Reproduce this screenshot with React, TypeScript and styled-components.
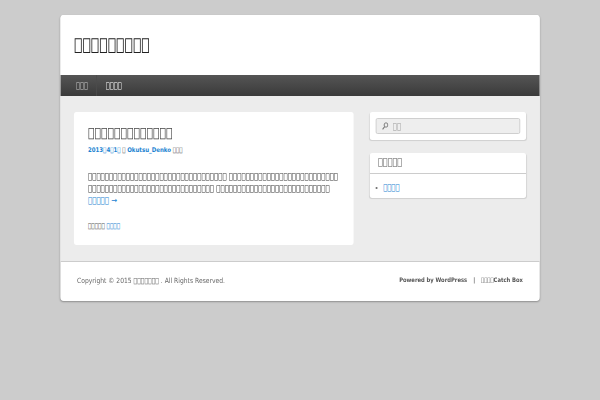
import * as React from 'react'
import styled, { createGlobalStyle } from 'styled-components'

// the reference is squeezed sideways, so the whole sheet is laid out wider and scaled down
const SQUEEZE = 0.85
const x = (px: number) => `${px / SQUEEZE}px`

const tofu = (n: number) => '\uE000'.repeat(n)

const GlobalStyle = createGlobalStyle`
  html, body {
    margin: 0;
    padding: 0;
    background: #ccc;
    overflow: hidden;
  }
  body {
    font-family: 'DejaVu Sans', sans-serif;
    color: #333;
    text-rendering: geometricPrecision;
  }
  a {
    color: #1982d1;
    text-decoration: none;
  }
`

const Sheet = styled.div`
  width: ${x(600)};
  height: 400px;
  box-sizing: border-box;
  padding: 15px ${x(60)} 0;
  transform: scaleX(${SQUEEZE});
  transform-origin: left top;
  filter: blur(0.4px);
`

const Page = styled.div`
  border-radius: 4px;
  overflow: hidden;
  box-shadow: 0 1px 2px rgba(0, 0, 0, 0.3);
  background: #fff;
`

const Branding = styled.header`
  height: 60px;
  box-sizing: border-box;
  padding: 19px ${x(14)} 0;
  background: #fff;
`

const SiteTitle = styled.h1`
  margin: 0;
  font-size: 16.5px;
  line-height: 22px;
  font-weight: 400;
  color: #222;
  filter: grayscale(1);
`

const Nav = styled.nav`
  height: 21px;
  display: flex;
  background: linear-gradient(#555, #3a3a3a);
`

const NavItem = styled.a<{ $current?: boolean }>`
  padding: 0 ${({ $current }) => ($current ? `${x(9)} 0 ${x(9)}` : `${x(8)} 0 ${x(16)}`)};
  font-size: 7.8px;
  line-height: 21px;
  color: ${({ $current }) => ($current ? '#fff' : '#ccc')};
  border-right: ${({ $current }) => ($current ? 'none' : '1px solid #4c4c4c')};
  filter: grayscale(1);
`

const Main = styled.div`
  display: flex;
  gap: ${x(16)};
  padding: 16px ${x(14)};
  background: #ececec;
  align-items: flex-start;
  border-bottom: 1px solid #ccc;
`

const Post = styled.article`
  width: ${x(280)};
  height: 133px;
  box-sizing: border-box;
  padding: 12px ${x(14)} 0;
  background: #fff;
  border-radius: 3px;
`

const PostTitle = styled.h2`
  margin: 0;
  font-size: 12.75px;
  line-height: 20px;
  font-weight: 400;
  color: #444;
  filter: grayscale(1);
`

const Meta = styled.div`
  margin-top: 1px;
  font-size: 6.4px;
  line-height: 10px;
  color: #555;
  a {
    font-weight: 700;
  }
`

const Body = styled.div`
  margin-top: 15px;
  font-size: 8.24px;
  line-height: 12px;
  white-space: nowrap;
  color: #333;
`

const BodyLine = styled.div`
  filter: grayscale(1);
`

const Tags = styled.div`
  margin-top: 15px;
  font-size: 6.6px;
  line-height: 10px;
  color: #555;
`

const Sidebar = styled.aside`
  flex: 1;
  display: flex;
  flex-direction: column;
  gap: 13px;
`

const Widget = styled.section`
  background: #fff;
  border-radius: 3px;
  box-shadow: 0 1px 1px rgba(0, 0, 0, 0.12);
`

const SearchWidget = styled(Widget)`
  padding: 6px ${x(6)};
`

const SearchBox = styled.div`
  height: 16px;
  box-sizing: border-box;
  display: flex;
  align-items: center;
  gap: ${x(4)};
  padding: 0 ${x(5)};
  background: #eee;
  border: 1px solid #ccc;
  border-radius: 2px;
  font-size: 8px;
  color: #999;
  filter: grayscale(1);
`

const SearchIcon = styled.svg`
  width: ${x(7)};
  height: 8px;
  flex: none;
`

const WidgetTitle = styled.h3`
  margin: 0;
  padding: 0 ${x(8)};
  height: 21px;
  box-sizing: border-box;
  font-size: 9.5px;
  line-height: 20px;
  font-weight: 400;
  border-bottom: 1px solid #ccc;
  color: #555;
  filter: grayscale(1);
`

const WidgetList = styled.ul`
  margin: 0;
  padding: 9px ${x(6)} 5px;
  list-style: none;
  font-size: 8px;
  line-height: 10px;
`

const WidgetItem = styled.li`
  display: flex;
  align-items: center;
  gap: ${x(5.7)};
`

const Bullet = styled.span`
  width: ${x(1.5)};
  height: 2px;
  background: #777;
`

const Footer = styled.footer`
  height: 39px;
  box-sizing: border-box;
  padding: 0 ${x(17)} 2px;
  display: flex;
  align-items: center;
  justify-content: space-between;
  font-size: 7.1px;
  color: #666;
  filter: grayscale(1);
`

const Credits = styled.div`
  font-size: 6.15px;
  font-weight: 700;
  color: #555;
  display: flex;
  gap: ${x(6)};
`

export default function App() {
  return (
    <>
      <GlobalStyle />
      <Sheet>
        <Page>
          <Branding>
            <SiteTitle>{tofu(9)}</SiteTitle>
          </Branding>
          <Nav>
            <NavItem>{tofu(3)}</NavItem>
            <NavItem $current>{tofu(4)}</NavItem>
          </Nav>
          <Main>
            <Post>
              <PostTitle>{tofu(13)}</PostTitle>
              <Meta>
                <a>2013{tofu(1)}4{tofu(1)}1{tofu(1)}</a> {tofu(1)} <a>Okutsu_Denko</a> {tofu(3)}
              </Meta>
              <Body>
                <BodyLine>{tofu(33)} {tofu(26)}</BodyLine>
                <BodyLine>{tofu(30)} {tofu(27)}</BodyLine>
                <a>{tofu(5)} →</a>
              </Body>
              <Tags>
                {tofu(5)} <a>{tofu(4)}</a>
              </Tags>
            </Post>
            <Sidebar>
              <SearchWidget>
                <SearchBox>
                  <SearchIcon viewBox="0 0 8 8" fill="none" stroke="#777">
                    <circle cx="5" cy="3" r="2.2" strokeWidth="1" />
                    <path d="M3.4 4.6 1 7.4" strokeWidth="1.3" />
                  </SearchIcon>
                  {tofu(2)}
                </SearchBox>
              </SearchWidget>
              <Widget>
                <WidgetTitle>{tofu(5)}</WidgetTitle>
                <WidgetList>
                  <WidgetItem>
                    <Bullet />
                    <a>{tofu(4)}</a>
                  </WidgetItem>
                </WidgetList>
              </Widget>
            </Sidebar>
          </Main>
          <Footer>
            <div>Copyright © 2015 {tofu(7)} . All Rights Reserved.</div>
            <Credits>
              <span>Powered by WordPress</span>
              <span>|</span>
              <span>{tofu(4)}Catch Box</span>
            </Credits>
          </Footer>
        </Page>
      </Sheet>
    </>
  )
}
